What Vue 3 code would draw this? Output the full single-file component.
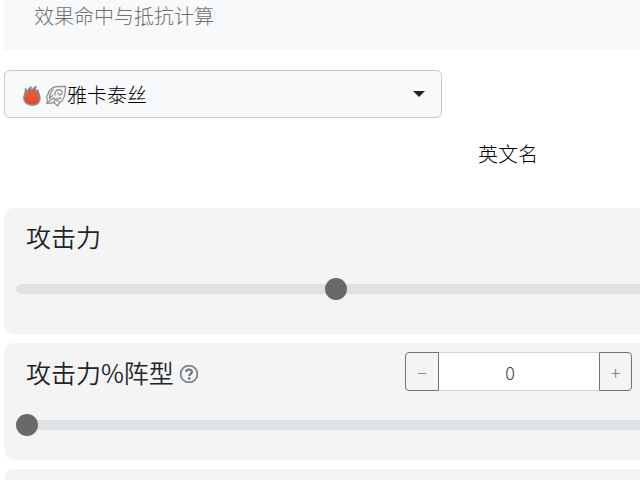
<script setup>
import { ref } from 'vue'

const hero = ref('雅卡泰丝')
const attack = ref(50)
const formation = ref(0)
</script>

<template>
  <main class="page">
    <header class="banner">效果命中与抵抗计算</header>

    <div class="picker">
      <svg class="element" viewBox="0 0 20 22" aria-hidden="true">
        <defs>
          <linearGradient id="flame" x1="0" y1="0" x2="0" y2="1">
            <stop offset="0" stop-color="#98604e" />
            <stop offset="0.4" stop-color="#e65c36" />
            <stop offset="1" stop-color="#de4230" />
          </linearGradient>
        </defs>
        <path d="M3.500 3.500C4 5 4.500 6 5.500 6.500 6 4.500 7 3 9 2 8.800 3.500 9 5 10 6 10.500 4 11.500 2.500 14 1.500 13 3.500 13.200 5 14 6.500L16 5C16 8 18 9.500 18 13c0 4.700-3.200 7.200-8 7.200S1.800 17.500 1.800 13C1.800 9.500 4 7.500 3.500 3.500Z" fill="url(#flame)" stroke="#958d89" stroke-width="1.400" stroke-linejoin="round" />
      </svg>
      <svg class="role" viewBox="0 0 22 22" aria-hidden="true">
        <path d="M20.500 1.500H13C8 1.500 4 4.500 3 9L1.500 12.500 2.500 14 1.800 18.500 6 18l3-.5 3.500 3.500 2.500-3.500C19.500 15 20.500 9 20.500 1.500Z" fill="#f4f4f4" stroke="#949494" stroke-width="1.300" stroke-linejoin="round" />
        <g fill="none" stroke="#949494" stroke-width="1.300" stroke-linejoin="round" stroke-linecap="round">
          <path d="M10 10C9.500 6.500 11.500 4.500 14.500 4.800c2.500.2 3.500 2.700 2 4.200s-4 .5-3.500-1" />
          <path d="M8 4.500C5.500 7 4.500 10 4.500 13.500l3-3M3 17l5.500-4 1.500 1.500 6-1.500M9 17.300l1-2.800 4.500 2.500" />
        </g>
      </svg>
      <select v-model="hero" class="hero" aria-label="英雄">
        <option>雅卡泰丝</option>
      </select>
      <svg class="caret" viewBox="0 0 12 6" aria-hidden="true">
        <path d="M0 0h12L6 6Z" fill="#212529" />
      </svg>
    </div>

    <div class="name">英文名</div>

    <section class="card tall">
      <div class="head"><label class="title" for="attack">攻击力</label></div>
      <input id="attack" v-model.number="attack" class="range" type="range" min="0" max="100" />
    </section>

    <section class="card">
      <div class="head">
        <label class="title" for="formation">攻击力%阵型</label>
        <svg class="help" viewBox="0 0 16 16" fill="#6c757d" aria-hidden="true">
          <path d="M8 15A7 7 0 1 1 8 1a7 7 0 0 1 0 14m0 1A8 8 0 1 0 8 0a8 8 0 0 0 0 16" stroke="#6c757d" stroke-width="0.500" />
          <path d="M5.500 6.200C5.500 4.700 6.500 4 8 4s2.600.8 2.600 2.200c0 1.900-2.300 1.900-2.300 3.500" fill="none" stroke="#6c757d" stroke-width="1.900" />
          <circle cx="8.200" cy="11.900" r="1.200" />
        </svg>
        <div class="stepper">
          <button class="step minus" type="button" aria-label="减少" @click="formation = Math.max(0, formation - 1)">−</button>
          <input v-model.number="formation" class="count" type="text" inputmode="numeric" aria-label="攻击力%阵型" />
          <button class="step plus" type="button" aria-label="增加" @click="formation = Math.min(100, formation + 1)">+</button>
        </div>
      </div>
      <input id="formation" v-model.number="formation" class="range" type="range" min="0" max="100" />
    </section>

    <section class="card last"></section>
  </main>
</template>

<style>
html {
  overflow: hidden;
  background: #fff;
}
</style>

<style scoped>
.page,
.page * {
  box-sizing: border-box;
}

.page {
  max-height: 100vh;
  margin-right: -28px;
  padding-left: 4px;
  overflow: hidden;
  color: #212529;
  font-family: "Noto Sans CJK SC", sans-serif;
  font-size: 20px;
  font-weight: 300;
  line-height: 30px;
}

.banner {
  padding: 1px 30px 19px;
  background: #f8f9fa;
  color: #707070;
}

.picker {
  display: flex;
  align-items: center;
  width: 66%;
  height: 48px;
  margin-top: 20px;
  padding: 0 16px 0 17px;
  border: 1px solid #c6c7c8;
  border-radius: 6px;
  background: #f8f9fa;
}

.element {
  width: 20px;
  height: 22px;
  margin-top: 4px;
}

.role {
  width: 22px;
  height: 22px;
  margin: 4px 0 0 3px;
}

.hero {
  flex: 1;
  min-width: 0;
  padding: 2px 0 0;
  border: 0;
  appearance: none;
  background: transparent;
  color: #000;
  font: inherit;
}

.caret {
  width: 12px;
  height: 6px;
}

.name {
  width: 320px;
  margin: 21px 0 39px auto;
  color: #000;
  text-align: center;
}

.card {
  min-height: 117px;
  margin-bottom: 9px;
  padding: 9px 12px;
  border-radius: 10px;
  background: #f4f4f4;
}

.tall {
  min-height: 126px;
  padding-top: 8px;
}

.last {
  margin-bottom: 0;
}

.head {
  display: flex;
  align-items: center;
  height: 40px;
  padding: 0 24px 0 10px;
}

.title {
  font-size: 25px;
  font-weight: 350;
  line-height: 40px;
}

.help {
  width: 18px;
  height: 18px;
  margin: 4px 0 0 6px;
}

.stepper {
  display: flex;
  align-self: flex-start;
  height: 39px;
  margin-left: auto;
}

.step {
  width: 34px;
  padding: 0;
  border: 1px solid #6c757d;
  background: transparent;
  color: #6c757d;
  font: inherit;
  font-size: 18px;
}

.minus {
  border-radius: 4px 0 0 4px;
}

.plus {
  width: 33px;
  border-radius: 0 4px 4px 0;
}

.count {
  width: 160px;
  padding: 0 18px 0 0;
  border: 1px solid #ced4da;
  border-width: 1px 0;
  border-radius: 0;
  background: #fff;
  color: #343a40;
  font: inherit;
  font-size: 18px;
  text-align: center;
}

.range {
  display: block;
  width: 100%;
  height: 22px;
  margin: 22px 0 0;
  appearance: none;
  background: transparent;
}

.range::-webkit-slider-runnable-track {
  height: 10px;
  border-radius: 5px;
  background: #dee2e6;
}

.range::-webkit-slider-thumb {
  width: 22px;
  height: 22px;
  margin-top: -6px;
  border: 0;
  border-radius: 50%;
  appearance: none;
  background: #696969;
}
</style>
